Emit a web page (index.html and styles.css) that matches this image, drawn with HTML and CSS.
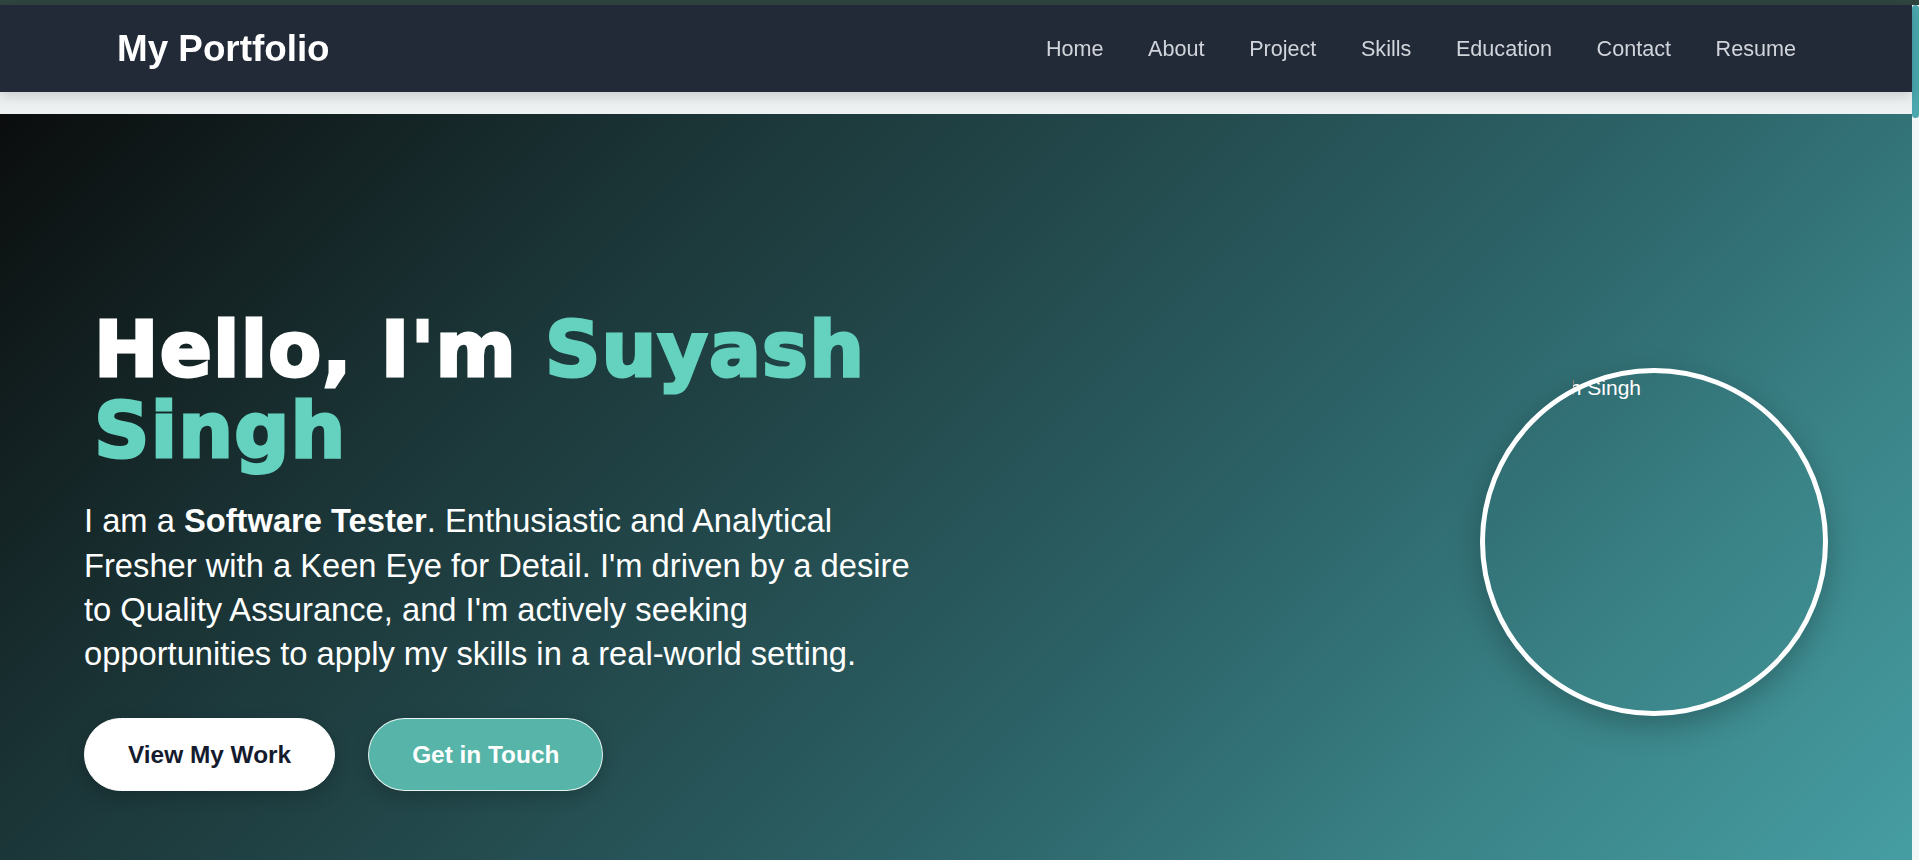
FILE: index.html
```html
<!DOCTYPE html>
<html lang="en">
<head>
<meta charset="UTF-8">
<title>My Portfolio</title>
<link rel="stylesheet" href="styles.css">
</head>
<body>
<div class="window-edge"></div>
<header class="navbar">
  <a class="logo" href="#home">My Portfolio</a>
  <nav>
    <ul class="nav-links">
      <li><a href="#home">Home</a></li>
      <li><a href="#about">About</a></li>
      <li><a href="#project">Project</a></li>
      <li><a href="#skills">Skills</a></li>
      <li><a href="#education">Education</a></li>
      <li><a href="#contact">Contact</a></li>
      <li><a href="#resume">Resume</a></li>
    </ul>
  </nav>
</header>
<main>
  <section class="hero" id="home">
    <div class="hero-text">
      <h1>Hello, I'm <span class="name">Suyash Singh</span></h1>
      <p class="intro">I am a <strong>Software Tester</strong>. Enthusiastic and Analytical Fresher with a Keen Eye for Detail. I'm driven by a desire to Quality Assurance, and I'm actively seeking opportunities to apply my skills in a real-world setting.</p>
      <div class="hero-buttons">
        <a class="btn btn-primary" href="#project">View My Work</a>
        <a class="btn btn-secondary" href="#contact">Get in Touch</a>
      </div>
    </div>
    <div class="hero-image">
      <div class="avatar" role="img" aria-label="Suyash Singh">
        <span class="alt-clip"><span>Suyash Singh</span></span>
      </div>
    </div>
  </section>
  <section class="section" id="about"></section>
  <section class="section" id="project"></section>
  <section class="section" id="skills"></section>
  <section class="section" id="education"></section>
  <section class="section" id="contact"></section>
</main>
<div class="scroll-rail" aria-hidden="true"><div class="scroll-thumb"></div></div>
</body>
</html>
```
FILE: styles.css
```css
html, body {
  margin: 0;
  padding: 0;
}

body {
  font-family: "Liberation Sans", Arial, sans-serif;
  background: #eef1f2;
  padding-right: 7px;
}

.window-edge {
  height: 5px;
  background: #30443f;
}

.navbar {
  position: relative;
  z-index: 10;
  height: 87px;
  box-sizing: border-box;
  padding: 0 116px 0 117px;
  display: flex;
  align-items: center;
  justify-content: space-between;
  background: #222937;
  box-shadow: 0 4px 12px rgba(0, 0, 0, 0.16);
}

.logo {
  color: #ffffff;
  font-weight: 700;
  font-size: 36.8px;
  text-decoration: none;
}

.nav-links {
  display: flex;
  gap: 44.6px;
  list-style: none;
  margin: 0;
  padding: 0;
}

.nav-links a {
  color: #d1d5db;
  font-size: 21.6px;
  text-decoration: none;
}

.hero {
  margin-top: 22px;
  height: 856px;
  box-sizing: border-box;
  padding: 0 84px;
  display: flex;
  align-items: center;
  justify-content: space-between;
  background: linear-gradient(135deg, #0b0d0d 0%, #1b3537 26%, #23494c 42%, #2d666b 62%, #3a8387 78%, #48a3a8 100%);
}

.hero-text {
  width: 845px;
  padding-top: 16px;
}

.hero-text h1 {
  margin: 0;
  padding-left: 10px;
  font-family: "DejaVu Sans", "Liberation Sans", sans-serif;
  font-weight: 700;
  font-size: 77px;
  line-height: 81px;
  letter-spacing: 1.2px;
  color: #ffffff;
  -webkit-text-stroke: 3px #ffffff;
}

.hero-text h1 .name {
  color: #64d2be;
  -webkit-text-stroke: 3px #64d2be;
}

.intro {
  margin: 28px 0 0;
  font-size: 32.7px;
  line-height: 44.4px;
  color: #ffffff;
}

.hero-buttons {
  display: flex;
  gap: 33px;
  margin-top: 41.7px;
}

.btn {
  display: inline-block;
  padding: 21.2px 43px;
  border-radius: 50px;
  border: 1px solid transparent;
  font-weight: 700;
  font-size: 24.4px;
  text-decoration: none;
  box-shadow: 0 6px 18px rgba(0, 0, 0, 0.2);
}

.btn-primary {
  background: #ffffff;
  border-color: #ffffff;
  color: #151b2e;
}

.btn-secondary {
  background: #56b5a8;
  border-color: rgba(255, 255, 255, 0.85);
  color: #ffffff;
}

.avatar {
  position: relative;
  width: 348px;
  height: 348px;
  box-sizing: border-box;
  border: 5px solid #ffffff;
  border-radius: 50%;
  box-shadow: 0 10px 30px rgba(0, 0, 0, 0.25);
}

.alt-clip {
  position: absolute;
  top: 3px;
  left: 88px;
  width: 68px;
  overflow: hidden;
  display: flex;
  justify-content: flex-end;
  white-space: nowrap;
  font-size: 21px;
  color: #ffffff;
}

.section {
  height: 1115px;
}

.scroll-rail {
  position: fixed;
  top: 0;
  right: 0;
  width: 7px;
  height: 100vh;
  box-sizing: border-box;
  border-top: 5px solid #30443f;
  background: #f4f7f8;
}

.scroll-thumb {
  height: 113px;
  border-radius: 4px;
  background: #4aa8ae;
}
```
